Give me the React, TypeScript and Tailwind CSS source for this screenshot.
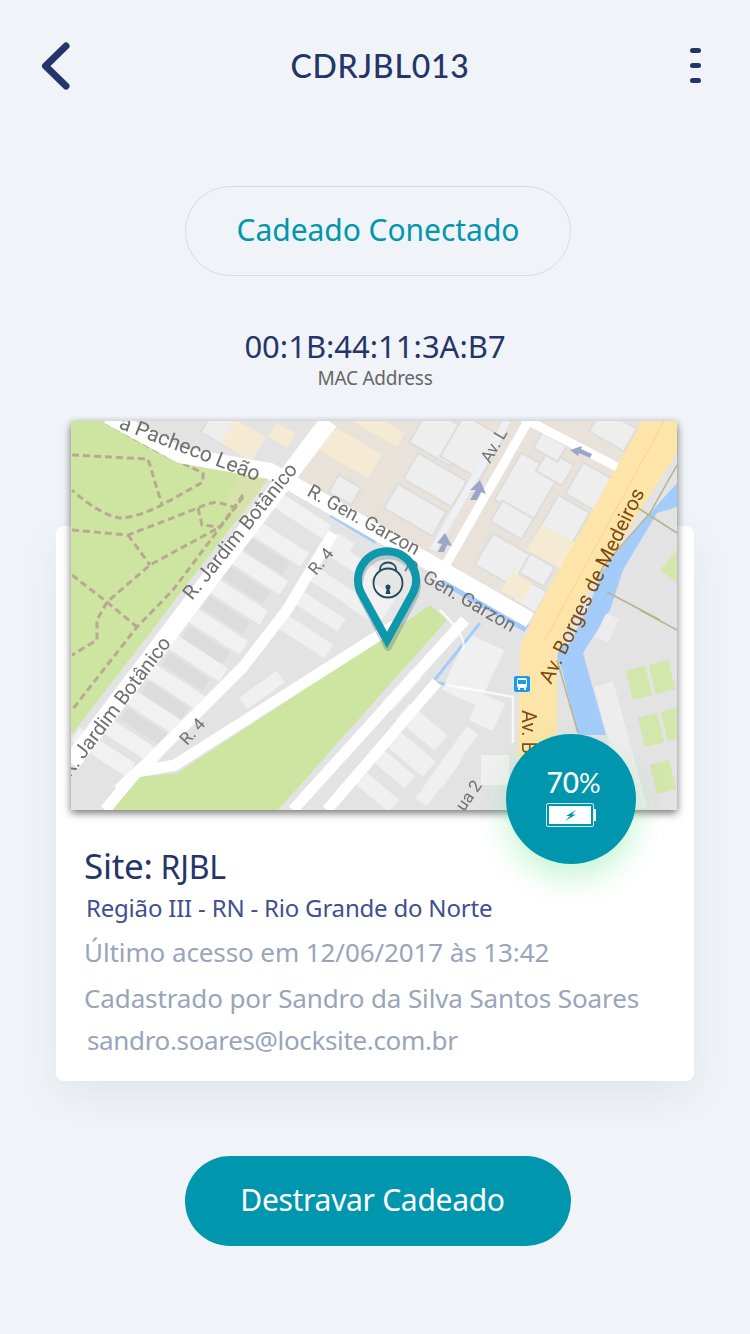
const bodyFont = { fontFamily: '"Noto Sans", "Open Sans", sans-serif' };

const lightBlocks = [
  [299, 514], [277, 542], [256, 570], [236, 600], [216, 630], [196, 657], [176, 687], [155, 713], [132, 742], [103, 752],
];
const darkBlocks = [
  [266, 556], [246, 585], [226, 615], [206, 645], [186, 672], [165, 700], [144, 727],
];
const wedgeBlocks = [
  [352, 562, 52, 15], [335, 588, 62, 15], [318, 610, 56, 15], [302, 634, 64, 16], [372, 602, 36, 34], [342, 545, 20, 16],
];
const topBlocks = [
  [440, 437, 48, 40], [472, 447, 46, 48], [435, 480, 56, 30], [415, 510, 56, 28], [527, 487, 44, 54],
  [512, 520, 36, 24], [563, 523, 36, 44], [503, 560, 44, 36], [537, 570, 28, 22], [530, 596, 26, 24],
  [555, 468, 30, 24], [590, 487, 36, 36], [550, 447, 28, 18], [613, 430, 40, 26], [223, 430, 36, 26],
  [345, 490, 26, 20],
];
const sandBlocks = [
  [243, 440, 36, 28], [282, 435, 22, 16], [350, 452, 58, 28], [375, 425, 60, 16], [552, 547, 40, 30], [517, 587, 24, 22],
];
const lowerBlocks = [
  [473, 670, 40, 62, 25], [487, 712, 26, 30, 25], [422, 727, 50, 20, 40], [410, 753, 50, 20, 40], [393, 768, 44, 16, 40],
  [375, 790, 50, 16, 40], [445, 770, 34, 16, -55], [462, 745, 36, 14, -55], [430, 790, 30, 14, -55], [495, 770, 28, 30, 0],
  [262, 690, 46, 14, -36], [402, 690, 44, 13, -48],
];
const gardens = [
  [639, 683], [662, 677], [651, 730], [674, 724], [663, 777],
];

const MapView = () => (
  <svg viewBox="71 421 606 389" className="block h-full w-full blur-[0.5px]">
    <rect x="71" y="421" width="606" height="389" fill="#e3e3e3" />
    <polygon points="333,421 642,421 533,620 275,470" fill="#e9e2da" />
    <polygon points="71,421 103,421 203,463 268,479 73,733 71,733" fill="#cde5a0" />
    <polygon points="240,471 268,479 238,520 226,500" fill="#d9e2ad" />
    <g fill="none" stroke="#b8aa92" strokeWidth="3" strokeDasharray="7 4">
      <path d="M72 455 L148 459 L162 505" />
      <path d="M105 422 L155 450 L203 473 L203 482 L162 505 Q135 518 120 518 Q100 515 72 490" />
      <path d="M72 530 L128 535 L198 508 Q212 501 220 503 L237 508 M198 508 L202 525 L220 527" />
      <path d="M128 535 L150 565" />
      <path d="M243 495 L220 527 L150 565 L107 602 L97 620 L97 640 L72 655" />
      <path d="M72 575 L107 602 L137 627" />
      <path d="M243 497 L173 590 L137 627 L72 710" />
    </g>

    <g fill="#eeeeee">
      {topBlocks.map(([x, y, w, h]) => (
        <rect key={`${x}-${y}`} x={x - w / 2} y={y - h / 2} width={w} height={h} stroke="#dddddd" strokeWidth="2" transform={`rotate(30 ${x} ${y})`} />
      ))}
    </g>
    <g fill="#f5ead3">
      {sandBlocks.map(([x, y, w, h]) => (
        <rect key={`${x}-${y}`} x={x - w / 2} y={y - h / 2} width={w} height={h} transform={`rotate(30 ${x} ${y})`} />
      ))}
    </g>

    {lightBlocks.map(([x, y]) => (
      <rect key={`${x}-${y}`} x={x - 33} y={y - 8} width="66" height="16" fill="#f1f1f1" transform={`rotate(33 ${x} ${y})`} />
    ))}
    {darkBlocks.map(([x, y]) => (
      <rect key={`${x}-${y}`} x={x - 24} y={y - 7} width="48" height="14" fill="#dcdcdc" transform={`rotate(33 ${x} ${y})`} />
    ))}
    {wedgeBlocks.map(([x, y, w, h]) => (
      <rect key={`${x}-${y}`} x={x - w / 2} y={y - h / 2} width={w} height={h} fill="#f0f0f0" transform={`rotate(33 ${x} ${y})`} />
    ))}
    {lowerBlocks.map(([x, y, w, h, r]) => (
      <rect key={`${x}-${y}`} x={x - w / 2} y={y - h / 2} width={w} height={h} fill="#f0f0f0" transform={`rotate(${r} ${x} ${y})`} />
    ))}

    <polygon points="113,810 137,777 177,773 380,640 430,605 447,620 278,810" fill="#cde5a0" />
    <polygon points="677,550 677,583 660,570" fill="#d3e6ab" />

    <polygon points="677,483 650,513 603,570 587,610 570,643 560,647 557,657 562,670 578,735 606,735 583,653 610,610 623,570 657,513 677,507" fill="#a3ccfb" />
    <polygon points="642,421 677,421 677,453 577,610 557,653 557,745 518,760 520,647 537,610" fill="#fde4a8" />
    <path d="M664 421 L545 640" stroke="#f3d595" strokeWidth="1" fill="none" />
    <path d="M557 660 L578 733 M677 465 L650 513 L603 567 L597 580 M638 508 L677 533 M607 592 L660 620 M640 610 L677 630" stroke="#b8b38e" strokeWidth="1.5" fill="none" />
    <path d="M332 513 L377 540 M443 580 L527 628" stroke="#a3ccfb" strokeWidth="9" fill="none" />
    <path d="M480 623 L433 682 L445 684" stroke="#a3ccfb" strokeWidth="3" fill="none" />

    <g fill="none" stroke="#ffffff" strokeLinejoin="round">
      <path d="M108 416 L180 455 L270 471 L530 620" strokeWidth="16" />
      <path d="M329 421 L71 763" strokeWidth="18" />
      <path d="M333 533 L287 610 L243 667 L150 760 L118 790" strokeWidth="11" />
      <path d="M105 810 L137 772 L175 765 L395 625" strokeWidth="11" />
      <path d="M293 810 L465 620 M327 810 L437 682" strokeWidth="11" />
      <path d="M527 423 L437 580" strokeWidth="9" />
      <path d="M523 418 L617 467" strokeWidth="9" />
      <path d="M440 610 Q470 640 462 650 M447 685 L513 697 L513 743" strokeWidth="2.5" strokeOpacity="0.75" />
    </g>
    <path d="M507 421 L433 550" stroke="#eff0f5" strokeWidth="7" fill="none" />
    <g fill="#9aa6c8">
      <polygon points="480,480 470,490 476,490 470,500 477,500 481,492 486,494" />
      <polygon points="445,533 437,543 442,544 438,552 444,552 447,545 452,546" />
      <polygon points="570,450 582,446 581,449 592,454 590,458 579,453 578,456" />
    </g>

    {gardens.map(([x, y]) => (
      <rect key={`${x}-${y}`} x={x - 10} y={y - 15} width="20" height="30" fill="#d3e6ab" transform={`rotate(-14 ${x} ${y})`} />
    ))}
    <rect x="610" y="682" width="20" height="130" fill="#ededed" transform="rotate(-15 620 745)" />
    <rect x="600" y="615" width="14" height="26" fill="#ececec" transform="rotate(25 607 628)" />

    <g fill="#6f6f6f" fontSize="20" style={{ fontFamily: "Roboto, sans-serif" }}>
      <text transform="translate(118 428) rotate(21)" fontSize="21">a Pacheco Leão</text>
      <text transform="translate(306 495) rotate(29)" fontSize="19">R. Gen. Garzon</text>
      <text transform="translate(403 570) rotate(30)" fontSize="19">R. Gen. Garzon</text>
      <text transform="translate(192 601) rotate(-51)">R. Jardim Botânico</text>
      <text transform="translate(70 778) rotate(-53)">R. Jardim Botânico</text>
      <text transform="translate(316 576) rotate(-50)" fontSize="17">R. 4</text>
      <text transform="translate(187 746) rotate(-48)" fontSize="17">R. 4</text>
      <text transform="translate(490 464) rotate(-60)" fontSize="17">Av. L</text>
      <text transform="translate(464 812) rotate(-55)" fontSize="17">ua 2</text>
      <text transform="translate(551 685) rotate(-64)" fontSize="20.5" fill="#7c4a12">Av. Borges de Medeiros</text>
      <text transform="translate(522 710) rotate(90)" fontSize="20" fill="#7c4a12">Av. B</text>
    </g>

    <rect x="514" y="676" width="16" height="16" rx="2" fill="#1a9bf0" />
    <rect x="517" y="678" width="10" height="10" rx="2" fill="#ffffff" />
    <rect x="518" y="680" width="8" height="4" fill="#1a9bf0" />
    <rect x="518" y="688" width="2" height="2" fill="#ffffff" />
    <rect x="524" y="688" width="2" height="2" fill="#ffffff" />

    <path d="M387 645 L361 595 A29 29 0 1 1 413 595 Z" fill="none" stroke="#3d6b75" strokeOpacity="0.3" strokeWidth="8" strokeLinejoin="round" transform="translate(1 2)" />
    <path d="M387 640 L361 593 A29 29 0 1 1 413 593 Z" fill="#ffffff" fillOpacity="0.12" stroke="#0f97ab" strokeWidth="8" strokeLinejoin="miter" />
    <circle cx="388" cy="583" r="14.5" fill="none" stroke="#1f4a5e" strokeWidth="1.8" />
    <path d="M380 570 V569 A8 6.5 0 0 1 396 569 V570" fill="none" stroke="#1f4a5e" strokeWidth="1.8" />
    <circle cx="388" cy="587" r="2.5" fill="#1f4a5e" />
    <path d="M387 588 L385.5 594 H390.5 L389 588 Z" fill="#1f4a5e" />
  </svg>
);

const BatteryIcon = () => (
  <svg viewBox="0 0 50 24" className="h-6 w-[50px]">
    <rect x="0.5" y="0.5" width="47" height="23" rx="1.5" fill="none" stroke="#ffffff" strokeOpacity="0.8" />
    <rect x="3" y="3" width="42" height="18" fill="#ffffff" />
    <rect x="48" y="6" width="2" height="12" fill="#ffffff" />
    <path d="M30 7 L20 13 L24 13 L19 18 L30 11.5 L26 11.5 Z" fill="#0097ae" />
  </svg>
);

export default function App() {
  return (
    <div className="min-h-[1334px] w-[750px] bg-[#f0f4f8] pb-[88px]" style={bodyFont}>
      <header className="flex h-[132px] items-center justify-between px-[40px]">
        <svg viewBox="0 0 30 50" className="h-[50px] w-[30px]">
          <path d="M26 5 L5.5 25 L26 45" fill="none" stroke="#243569" strokeWidth="7" strokeLinecap="round" strokeLinejoin="round" />
        </svg>
        <h1 className="text-[32px] leading-none font-medium tracking-[0.75px] text-[#243569]" style={{ fontFamily: "Lato, sans-serif" }}>
          CDRJBL013
        </h1>
        <div className="flex flex-col items-center gap-[10px] pr-[9px] pb-[2px]">
          <span className="h-[5px] w-[11px] rounded-full bg-[#243569]" />
          <span className="h-[5px] w-[11px] rounded-full bg-[#243569]" />
          <span className="h-[5px] w-[11px] rounded-full bg-[#243569]" />
        </div>
      </header>

      <div className="mt-[54px] flex justify-center pl-[6px]">
        <div className="flex h-[90px] w-[386px] items-center justify-center rounded-[45px] border border-[#d5dae6] pb-[4px] text-[30px] tracking-[-0.05px] text-[#0097ae]">
          Cadeado Conectado
        </div>
      </div>

      <div className="mt-[50px] flex flex-col items-center">
        <p className="text-[31px] leading-[40px] text-[#243569]">00:1B:44:11:3A:B7</p>
        <p className="text-[19px] leading-[24px] tracking-[-0.25px] text-[#666666]">MAC Address</p>
      </div>

      <div className="relative z-10 mx-[71px] mt-[31px] h-[389px] w-[606px] shadow-[0_3px_8px_rgba(0,0,0,0.55)]">
        <div className="h-full w-full overflow-hidden">
          <MapView />
        </div>
        <div className="absolute top-[313px] left-[435px] flex h-[130px] w-[130px] flex-col items-center rounded-full bg-[#0097ae] pt-[31px] shadow-[0_14px_30px_rgba(110,230,150,0.4)]">
          <span className="pl-[5px] text-[28px] leading-[34px] font-medium text-white" style={{ fontFamily: "Lato, sans-serif" }}>
            70<span className="text-[27px] font-normal">%</span>
          </span>
          <span className="mt-[3px] flex">
            <BatteryIcon />
          </span>
        </div>
      </div>

      <section className="mx-[56px] mt-[-284px] h-[555px] w-[638px] rounded-[8px] bg-white px-[28px] pt-[318px] shadow-[0_16px_40px_rgba(60,80,110,0.08)]">
        <p className="flex items-baseline gap-[8px] leading-[44px] text-[#243569]">
          <span className="text-[35px] tracking-[-0.3px]">Site:</span>
          <span className="text-[32px] tracking-[-0.2px]">RJBL</span>
        </p>
        <p className="mt-[3px] ml-[2px] text-[24px] leading-[32px] tracking-[-0.2px] text-[#3f4f92]">
          Região III - RN - Rio Grande do Norte
        </p>
        <p className="mt-[12px] text-[26px] leading-[32px] tracking-[-0.1px] text-[#98a5ba]">Último acesso em 12/06/2017 às 13:42</p>
        <p className="mt-[14px] text-[26px] leading-[32px] tracking-[-0.12px] text-[#98a5ba]">Cadastrado por Sandro da Silva Santos Soares</p>
        <p className="mt-[10px] ml-[3px] text-[26px] leading-[32px] tracking-[-0.35px] text-[#98a5ba]">sandro.soares@locksite.com.br</p>
      </section>

      <div className="mt-[75px] flex justify-center pl-[6px]">
        <button className="flex h-[90px] w-[386px] items-center justify-center rounded-[45px] bg-[#0097ae] pr-[11px] pb-[4px] text-[30px] tracking-[-0.3px] text-white">
          Destravar Cadeado
        </button>
      </div>
    </div>
  );
}
